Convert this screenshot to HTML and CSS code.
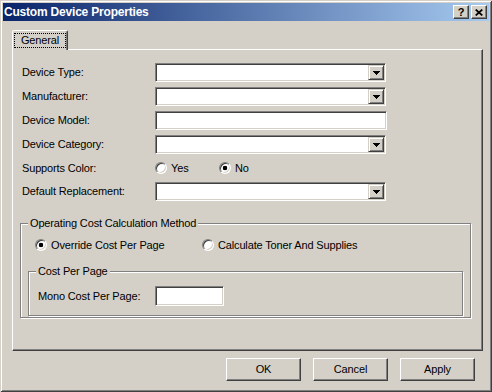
FILE: index.html
```html
<!DOCTYPE html>
<html>
<head>
<meta charset="utf-8">
<title>Custom Device Properties</title>
<link rel="stylesheet" href="styles.css">
</head>
<body>
<div class="window">
  <div class="titlebar">
    <span class="title">Custom Device Properties</span>
    <div class="caption-buttons">
      <span class="cap-btn">?</span>
      <span class="cap-btn"><svg width="8" height="7" viewBox="0 0 8 7"><path d="M0.7 0.5 L7.3 6.5 M7.3 0.5 L0.7 6.5" stroke="#000" stroke-width="1.7" fill="none"/></svg></span>
    </div>
  </div>
  <div class="content">
    <div class="tabs"><div class="tab"><span class="tab-label">General</span></div></div>
    <div class="panel">
      <div class="form">
        <div class="row"><span class="label">Device Type:</span><div class="combo"><span class="drop"><svg width="7" height="4" viewBox="0 0 7 4"><path d="M0 0H7L3.5 4Z" fill="#000"/></svg></span></div></div>
        <div class="row"><span class="label">Manufacturer:</span><div class="combo"><span class="drop"><svg width="7" height="4" viewBox="0 0 7 4"><path d="M0 0H7L3.5 4Z" fill="#000"/></svg></span></div></div>
        <div class="row"><span class="label">Device Model:</span><div class="textbox wide"></div></div>
        <div class="row"><span class="label">Device Category:</span><div class="combo"><span class="drop"><svg width="7" height="4" viewBox="0 0 7 4"><path d="M0 0H7L3.5 4Z" fill="#000"/></svg></span></div></div>
        <div class="row short"><span class="label">Supports Color:</span>
          <div class="options yn">
            <span class="option"><span class="radio"></span>Yes</span>
            <span class="option"><span class="radio checked"></span>No</span>
          </div>
        </div>
        <div class="row"><span class="label">Default Replacement:</span><div class="combo"><span class="drop"><svg width="7" height="4" viewBox="0 0 7 4"><path d="M0 0H7L3.5 4Z" fill="#000"/></svg></span></div></div>
      </div>
      <div class="group outer">
        <div class="group-title">Operating Cost Calculation Method</div>
        <div class="options cost">
          <span class="option"><span class="radio checked"></span>Override Cost Per Page</span>
          <span class="option"><span class="radio"></span>Calculate Toner And Supplies</span>
        </div>
        <div class="group inner">
          <div class="group-title">Cost Per Page</div>
          <div class="mono-row"><span class="label mono">Mono Cost Per Page:</span><div class="textbox small"></div></div>
        </div>
      </div>
    </div>
    <div class="buttons">
      <button type="button" class="btn">OK</button>
      <button type="button" class="btn">Cancel</button>
      <button type="button" class="btn">Apply</button>
    </div>
  </div>
</div>
</body>
</html>
```
FILE: styles.css
```css
html, body {
  margin: 0;
  padding: 0;
  background: #d4d0c8;
}
.window {
  box-sizing: border-box;
  width: 492px;
  height: 392px;
  padding: 3px;
  background: #d4d0c8;
  box-shadow: inset 1px 1px 0 #d4d0c8, inset -1px -1px 0 #404040, inset 2px 2px 0 #fff, inset -2px -2px 0 #808080;
  font: 11px/13px "Liberation Sans", Arial, sans-serif;
  letter-spacing: -0.15px;
  color: #000;
  display: flex;
  flex-direction: column;
}
.titlebar {
  box-sizing: border-box;
  height: 18px;
  flex: none;
  background: linear-gradient(to right, #0a246a, #a6caf0);
  display: flex;
  align-items: center;
  justify-content: space-between;
  padding: 0 2px 0 1px;
}
.title {
  color: #fff;
  font-weight: bold;
  font-size: 12px;
  letter-spacing: -0.2px;
}
.caption-buttons {
  display: flex;
  gap: 2px;
}
.cap-btn {
  box-sizing: border-box;
  width: 16px;
  height: 14px;
  background: #d4d0c8;
  border: 1px solid;
  border-color: #fff #404040 #404040 #fff;
  box-shadow: inset -1px -1px 0 #808080;
  display: flex;
  align-items: center;
  justify-content: center;
  font-weight: bold;
  font-size: 11px;
  line-height: 1;
  letter-spacing: 0;
}
.content {
  flex: 1;
  padding: 9px 6px 0 9px;
  display: flex;
  flex-direction: column;
}
.tabs {
  display: flex;
}
.tab {
  position: relative;
  z-index: 1;
  box-sizing: border-box;
  width: 56px;
  height: 20px;
  margin-bottom: -1px;
  background: #d4d0c8;
  border: 1px solid;
  border-bottom: 0;
  border-color: #fff #404040 transparent #fff;
  box-shadow: inset -1px 0 0 #808080;
  border-radius: 2px 2px 0 0;
  padding: 2px 1px 0 1px;
}
.tab-label {
  box-sizing: border-box;
  display: flex;
  align-items: center;
  justify-content: center;
  height: 15px;
  border: 1px dotted #000;
}
.panel {
  box-sizing: border-box;
  height: 302px;
  border: 1px solid;
  border-color: #fff #404040 #404040 #fff;
  box-shadow: inset -1px -1px 0 #808080;
  padding: 13px 0 0 0;
}
.form {
  display: flex;
  flex-direction: column;
  gap: 5px;
  padding-left: 9px;
}
.row {
  display: flex;
  align-items: center;
  height: 19px;
}
.row.short {
  height: 18px;
}
.label {
  width: 133px;
  flex: none;
}
.combo, .textbox {
  box-sizing: border-box;
  width: 231px;
  height: 19px;
  background: #fff;
  border: 1px solid;
  border-color: #808080 #fff #fff #808080;
  box-shadow: inset 1px 1px 0 #404040, inset -1px -1px 0 #d4d0c8;
}
.textbox.wide {
  width: 232px;
}
.combo {
  display: flex;
  justify-content: flex-end;
  padding: 1px;
}
.drop {
  box-sizing: border-box;
  width: 16px;
  height: 15px;
  background: #d4d0c8;
  border: 1px solid;
  border-color: #d4d0c8 #404040 #404040 #d4d0c8;
  box-shadow: inset 1px 1px 0 #fff, inset -1px -1px 0 #808080;
  display: flex;
  align-items: center;
  justify-content: center;
}
.drop svg {
  display: block;
  shape-rendering: crispEdges;
}
.options {
  display: flex;
  align-items: center;
}
.option {
  display: flex;
  align-items: center;
}
.yn .option {
  width: 64px;
}
.cost {
  margin-top: 7px;
  padding-left: 14px;
  height: 16px;
}
.cost .option {
  width: 167px;
}
.radio {
  box-sizing: border-box;
  flex: none;
  width: 12px;
  height: 12px;
  margin-right: 4px;
  border-radius: 50%;
  border: 1px solid;
  border-color: #808080 #fff #fff #808080;
  box-shadow: inset 1px 1px 0 #404040, inset -1px -1px 0 #d4d0c8;
  background: #fff;
}
.radio.checked {
  background: radial-gradient(circle, #000 0 2px, #fff 2.6px);
}
.group {
  border: 1px solid #808080;
  box-shadow: inset 1px 1px 0 #fff, 1px 1px 0 #fff;
}
.group.outer {
  margin: 22px 11px 0 7px;
  padding: 0 0 1px 0;
}
.group.inner {
  margin: 18px 7px 0 7px;
  padding: 0 0 9px 0;
}
.group-title {
  width: max-content;
  height: 13px;
  margin: -7px 0 0 7px;
  padding: 0 2px;
  background: #d4d0c8;
}
.mono-row {
  display: flex;
  align-items: center;
  height: 20px;
  margin-top: 8px;
  padding-left: 9px;
}
.label.mono {
  width: 117px;
}
.textbox.small {
  width: 69px;
  height: 20px;
}
.buttons {
  display: flex;
  justify-content: flex-end;
  gap: 12px;
  margin-top: 7px;
  padding-right: 8px;
}
.btn {
  box-sizing: border-box;
  width: 75px;
  height: 23px;
  padding: 0;
  margin: 0;
  background: #d4d0c8;
  border: 1px solid;
  border-color: #fff #404040 #404040 #fff;
  box-shadow: inset -1px -1px 0 #808080;
  font: inherit;
  letter-spacing: -0.15px;
  color: #000;
  display: flex;
  align-items: center;
  justify-content: center;
}
```
